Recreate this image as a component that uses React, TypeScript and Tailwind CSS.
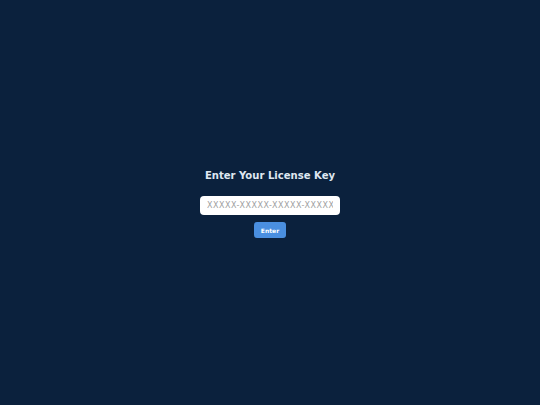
import { useState } from 'react'

export default function App() {
  const [key, setKey] = useState('')

  return (
    <div
      className="flex h-screen w-full flex-col items-center justify-center bg-[#0b213d] pt-[2px]"
      style={{ fontFamily: '"DejaVu Sans", Verdana, sans-serif' }}
    >
      <h1
        className="mb-[14px] text-[11.2px] font-bold leading-[13px] text-[#dfe7f1]"
        style={{ fontFamily: '"DejaVu Sans Condensed", "DejaVu Sans", sans-serif' }}
      >
        Enter Your License Key
      </h1>
      <input
        type="text"
        value={key}
        onChange={(e) => setKey(e.target.value)}
        placeholder="XXXXX-XXXXX-XXXXX-XXXXX"
        className="h-[19px] w-[140px] rounded-[4px] border-0 bg-white px-[7px] text-[8px] tracking-[0.5px] text-[#333] outline-none placeholder:text-[#a0a0a0]"
      />
      <button className="mt-[7px] h-[16px] w-[32px] rounded-[3px] bg-[#4a8fe0] text-[6px] font-bold text-white">
        Enter
      </button>
    </div>
  )
}
